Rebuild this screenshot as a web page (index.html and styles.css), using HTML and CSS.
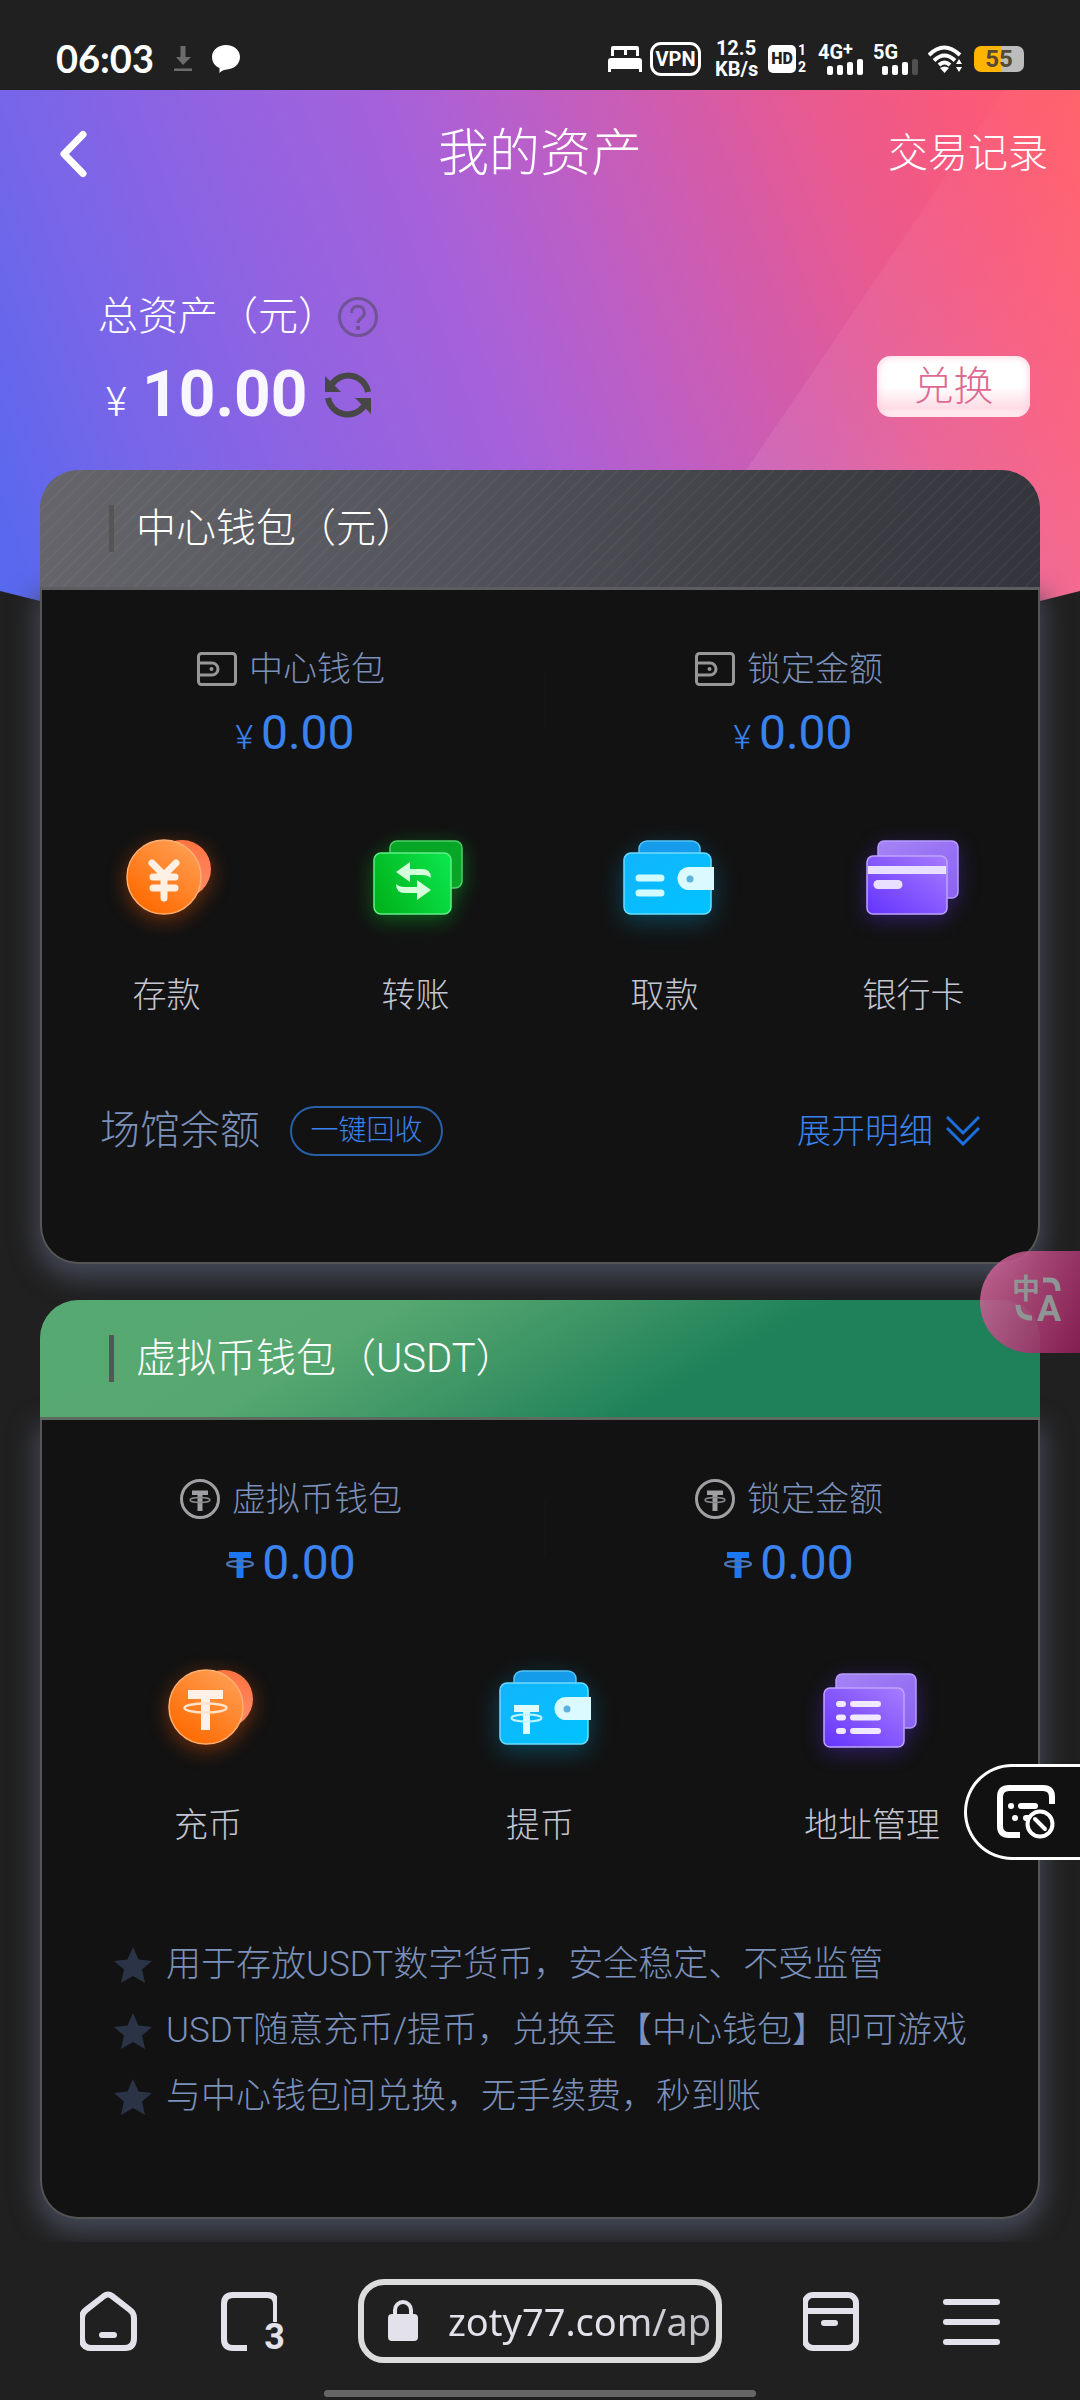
FILE: index.html
```html
<!DOCTYPE html>
<html lang="zh-CN">
<head>
    <meta charset="UTF-8">
    <meta name="viewport" content="width=device-width, initial-scale=1.0">
    <title>我的资产</title>
    <link rel="stylesheet" href="styles.css">
</head>
<body>

    <!-- shared gradients and symbols -->
    <svg class="defs" aria-hidden="true">
        <defs>
            <linearGradient id="orange" x1="1" y1="0" x2="0.3" y2="1">
                <stop offset="0" stop-color="#ffa45c"/>
                <stop offset="1" stop-color="#ff6a00"/>
            </linearGradient>
            <linearGradient id="coral" x1="0" y1="0" x2="0" y2="1">
                <stop offset="0" stop-color="#ff7440"/>
                <stop offset="1" stop-color="#ff8c6c"/>
            </linearGradient>
            <linearGradient id="green" x1="1" y1="0.3" x2="0" y2="0.7">
                <stop offset="0" stop-color="#0be34a"/>
                <stop offset="1" stop-color="#00b41c"/>
            </linearGradient>
            <linearGradient id="cyan" x1="0" y1="0" x2="1" y2="1">
                <stop offset="0" stop-color="#12b4fb"/>
                <stop offset="1" stop-color="#00c3ff"/>
            </linearGradient>
            <linearGradient id="purple" x1="1" y1="0" x2="0" y2="1">
                <stop offset="0" stop-color="#a77cff"/>
                <stop offset="1" stop-color="#6433ff"/>
            </linearGradient>
            <linearGradient id="lilac" x1="0" y1="0" x2="1" y2="1">
                <stop offset="0" stop-color="#a584f5"/>
                <stop offset="1" stop-color="#8b62f2"/>
            </linearGradient>
        </defs>
        <symbol id="wallet" viewBox="0 0 40 34">
            <g fill="none" stroke="#979797" stroke-width="3">
                <rect x="1.5" y="1.5" width="37" height="31" rx="3"/>
                <path d="M2 11h13a6 6 0 0 1 0 12H2"/>
            </g>
            <circle cx="14.500" cy="17" r="2" fill="#979797"/>
        </symbol>
        <symbol id="tether-ring" viewBox="0 0 40 40">
            <circle cx="20" cy="20" r="18.500" fill="none" stroke="#a0a0a4" stroke-width="3"/>
            <path d="M12 11.500h16v4.500h-5.500v16h-5v-16H12z" fill="#a0a0a4"/>
            <ellipse cx="20" cy="21" rx="10" ry="2.500" fill="none" stroke="#88888c" stroke-width="1.500"/>
        </symbol>
        <symbol id="tether" viewBox="0 0 28 28">
            <path d="M3 1h22v6h-7.500v20h-7V7H3z" fill="#1c78f2"/>
            <ellipse cx="14" cy="13" rx="13" ry="3" fill="none" stroke="#4b78b8" stroke-width="2"/>
        </symbol>
        <symbol id="star" viewBox="0 0 38 36">
            <path d="M19 0l5.500 12.500L38 14l-10 8.500L31 36l-12-7-12 7 3-13.500L0 14l13.500-1.500z" fill="#2a3446"/>
        </symbol>
    </svg>

    <header class="status-bar">
        <div class="status-left">
            <span class="clock">06:03</span>
            <svg width="18" height="26" viewBox="0 0 18 26">
                <path d="M6.500 0h5v11H17L9 19 2 11h4.500zM0 22.500h18V25H0z" fill="#6c6c6c"/>
            </svg>
            <svg width="28" height="28" viewBox="0 0 28 28">
                <path d="M14 0c8 0 14 5 14 12s-6 12-13 12.500c-2 0-5 .5-7.500 3.500V23C3 21 0 17 0 12 0 5 6 0 14 0z" fill="#fff"/>
            </svg>
        </div>
        <div class="status-right">
            <svg width="34" height="26" viewBox="0 0 34 26">
                <path d="M3 10V2q0-2 2-2h24q2 0 2 2v8h-3V4h-9v5h-3V4H6v6zM3 12h28q3 0 3 3v11h-3v-3H3v3H0V15q0-3 3-3z" fill="#fff"/>
            </svg>
            <span class="vpn">VPN</span>
            <span class="speed"><span>12.5</span><span>KB/s</span></span>
            <span class="hd"><b>HD</b><span class="sims"><span>1</span><span>2</span></span></span>
            <span class="signal">
                <span class="net">4G<span>+</span></span>
                <svg width="36" height="16" viewBox="0 0 36 16" fill="#fff">
                    <rect x="0" y="7" width="6" height="9" rx="2"/><rect x="10" y="6" width="6" height="10" rx="2"/><rect x="20" y="3" width="6" height="13" rx="2"/><rect x="30" width="6" height="16" rx="2"/>
                </svg>
            </span>
            <span class="signal">
                <span class="net">5G</span>
                <svg width="36" height="16" viewBox="0 0 36 16" fill="#fff">
                    <rect x="0" y="7" width="6" height="9" rx="2"/><rect x="10" y="6" width="6" height="10" rx="2"/><rect x="20" y="3" width="6" height="13" rx="2"/><rect x="30" width="6" height="16" rx="2" fill="#505050"/>
                </svg>
            </span>
            <svg width="34" height="28" viewBox="0 0 34 28" fill="none" stroke="#fff" stroke-width="4">
                <path d="M1 10Q16-5 32 10M6 15.500q10.500-10 21 0M11 20q5.500-5 11 0"/>
                <path d="M12 23q4.500-3 9 0l-4.500 5z" fill="#fff" stroke="none"/>
                <path d="M31 14l3 5h-6zM31 27l3-5h-6z" fill="#fff" stroke="none"/>
            </svg>
            <span class="battery">55</span>
        </div>
    </header>

    <main class="page">
        <div class="hero"></div>

        <nav class="nav">
            <button class="back" aria-label="返回">
                <svg width="28" height="48" viewBox="0 0 28 48" fill="none" stroke="#fff" stroke-width="7" stroke-linecap="round" stroke-linejoin="round">
                    <path d="M23 4.500L4 24l19 19.500"/>
                </svg>
            </button>
            <h1>我的资产</h1>
            <a href="#" class="records">交易记录</a>
        </nav>

        <section class="summary">
            <div>
                <div class="summary-label">总资产（元）
                    <svg width="40" height="40" viewBox="0 0 40 40" fill="none" stroke="#45444c" stroke-opacity=".5" stroke-width="3">
                        <circle cx="20" cy="20" r="18.500"/>
                        <path d="M13.500 16c0-9 13-9 13 0 0 5-6.500 5-6.500 10"/>
                        <path d="M20 29v4" stroke-width="4"/>
                    </svg>
                </div>
                <div class="summary-amount">
                    <small>¥</small><strong>10.00</strong>
                    <button class="refresh" aria-label="刷新">
                        <svg width="46" height="46" viewBox="0 0 46 46">
                            <g fill="none" stroke="#474747" stroke-width="6">
                                <path d="M43 20A20 20 0 0 0 7 12"/>
                                <path d="M3 26a20 20 0 0 0 36 8"/>
                            </g>
                            <path d="M0 4v16h16zM46 42V26H30z" fill="#474747"/>
                        </svg>
                    </button>
                </div>
            </div>
            <button class="exchange">兑换</button>
        </section>

        <section class="card">
            <h2 class="card-head center-head">中心钱包（元）</h2>
            <div class="card-body">
                <div class="stats">
                    <div class="stat">
                        <div class="stat-label"><svg width="40" height="34"><use href="#wallet"/></svg>中心钱包</div>
                        <div class="stat-value"><small>¥</small>0.00</div>
                    </div>
                    <div class="stat">
                        <div class="stat-label"><svg width="40" height="34"><use href="#wallet"/></svg>锁定金额</div>
                        <div class="stat-value"><small>¥</small>0.00</div>
                    </div>
                </div>

                <div class="actions">
                    <button class="action">
                        <svg class="glow-orange" viewBox="0 0 120 120">
                            <circle cx="75" cy="49" r="29" fill="url(#coral)"/>
                            <circle cx="57" cy="57" r="37" fill="url(#orange)" stroke="#ffb070" stroke-width="1.500"/>
                            <path d="M45 43l12 12 12-12M57 54v24M46 57h22M46 68h22" fill="none" stroke="#fff0e4" stroke-width="7" stroke-linecap="round"/>
                        </svg>
                        存款
                    </button>
                    <button class="action">
                        <svg class="glow-green" viewBox="0 0 120 120">
                            <rect x="34" y="21" width="72" height="47" rx="7" fill="#07a627" stroke="#4fd06a" stroke-width="1.500"/>
                            <rect x="18" y="33" width="77" height="61" rx="7" fill="url(#green)" stroke="#62ee88" stroke-width="1.500"/>
                            <path d="M40 52l14-10v7h12q9 0 9 9-3-3-9-3H54v7zM75 70L61 80v-7H49q-9 0-9-9 3 3 9 3h12v-7z" fill="#d6ffdc"/>
                        </svg>
                        转账
                    </button>
                    <button class="action">
                        <svg class="glow-cyan" viewBox="0 0 120 120">
                            <rect x="34" y="21" width="61" height="40" rx="8" fill="#149bea" stroke="#56c4f5" stroke-width="1.500"/>
                            <rect x="19" y="33" width="87" height="61" rx="7" fill="url(#cyan)" stroke="#6fdcff" stroke-width="1.500"/>
                            <path d="M34 58h22M34 73h22" stroke="#d2fbff" stroke-width="7" stroke-linecap="round"/>
                            <path d="M109 47v23H84a11.500 11.500 0 0 1 0-23z" fill="#dbfaff"/>
                            <circle cx="85" cy="59" r="3.500" fill="#5db2dc"/>
                        </svg>
                        取款
                    </button>
                    <button class="action">
                        <svg class="glow-purple" viewBox="0 0 120 120">
                            <rect x="24" y="21" width="80" height="57" rx="6" fill="url(#lilac)" stroke="#b79cff" stroke-width="1.500"/>
                            <rect x="13" y="36" width="80" height="58" rx="6" fill="url(#purple)" stroke="#bea4ff" stroke-width="1.500"/>
                            <path d="M14 46h78v8H14z" fill="#e9e0ff"/>
                            <path d="M24 64.500h20" stroke="#e9e0ff" stroke-width="9" stroke-linecap="round"/>
                        </svg>
                        银行卡
                    </button>
                </div>

                <div class="venue">
                    <span class="venue-label">场馆余额</span>
                    <button class="recover">一键回收</button>
                    <button class="expand">展开明细
                        <svg width="34" height="30" viewBox="0 0 34 30" fill="none" stroke="#1a70e0" stroke-width="3">
                            <path d="M1 1l16 16L33 1M1 12l16 16 16-16"/>
                        </svg>
                    </button>
                </div>
            </div>
        </section>

        <section class="card">
            <h2 class="card-head usdt-head">虚拟币钱包（USDT）</h2>
            <div class="card-body">
                <div class="stats">
                    <div class="stat">
                        <div class="stat-label"><svg width="40" height="40"><use href="#tether-ring"/></svg>虚拟币钱包</div>
                        <div class="stat-value"><svg width="28" height="28"><use href="#tether"/></svg>0.00</div>
                    </div>
                    <div class="stat">
                        <div class="stat-label"><svg width="40" height="40"><use href="#tether-ring"/></svg>锁定金额</div>
                        <div class="stat-value"><svg width="28" height="28"><use href="#tether"/></svg>0.00</div>
                    </div>
                </div>

                <div class="actions">
                    <button class="action">
                        <svg class="glow-orange" viewBox="0 0 120 120">
                            <circle cx="76" cy="49" r="29" fill="url(#coral)"/>
                            <circle cx="58" cy="57" r="37" fill="url(#orange)" stroke="#ffb070" stroke-width="1.500"/>
                            <path d="M40 40h35v9H62v31h-9V49H40z" fill="#fff0e8"/>
                            <ellipse cx="57.500" cy="58" rx="21" ry="4.500" fill="none" stroke="#ffe2c8" stroke-width="2.500"/>
                        </svg>
                        充币
                    </button>
                    <button class="action">
                        <svg class="glow-cyan" viewBox="0 0 120 120">
                            <rect x="34" y="21" width="62" height="40" rx="8" fill="#149bea" stroke="#56c4f5" stroke-width="1.500"/>
                            <rect x="20" y="33" width="88" height="61" rx="7" fill="url(#cyan)" stroke="#6fdcff" stroke-width="1.500"/>
                            <path d="M34 55h25v7h-9v22h-7V62h-9z" fill="#dffcff"/>
                            <ellipse cx="46.500" cy="68" rx="15" ry="3.500" fill="none" stroke="#c3f4ff" stroke-width="2"/>
                            <path d="M111 47v23H86a11.500 11.500 0 0 1 0-23z" fill="#dbfaff"/>
                            <circle cx="87" cy="59" r="3.500" fill="#5db2dc"/>
                        </svg>
                        提币
                    </button>
                    <button class="action">
                        <svg class="glow-purple" viewBox="0 0 120 120">
                            <rect x="24" y="24" width="80" height="54" rx="6" fill="url(#lilac)" stroke="#b79cff" stroke-width="1.500"/>
                            <rect x="12" y="38" width="80" height="59" rx="6" fill="url(#purple)" stroke="#bea4ff" stroke-width="1.500"/>
                            <path d="M27 54h4M41 54h25M27 67.500h4M41 67.500h25M27 81h4M41 81h25" stroke="#f0e9ff" stroke-width="6" stroke-linecap="round"/>
                        </svg>
                        地址管理
                    </button>
                </div>

                <ul class="notes">
                    <li><svg width="38" height="36"><use href="#star"/></svg>用于存放USDT数字货币，安全稳定、不受监管</li>
                    <li><svg width="38" height="36"><use href="#star"/></svg>USDT随意充币/提币，兑换至【中心钱包】即可游戏</li>
                    <li><svg width="38" height="36"><use href="#star"/></svg>与中心钱包间兑换，无手续费，秒到账</li>
                </ul>
            </div>
        </section>
    </main>

    <footer class="browser-bar">
        <div class="browser-tools">
            <button aria-label="主页">
                <svg width="58" height="60" viewBox="0 0 58 60" fill="none" stroke="#e3e1ea" stroke-width="6" stroke-linejoin="round" stroke-linecap="round">
                    <path d="M24 5q4-3 8 0l18 14q4 3 4 8v20q0 10-9 10H11q-9 0-9-10V27q0-5 4-8z"/>
                    <path d="M22 44h12"/>
                </svg>
            </button>
            <button class="tabs" aria-label="标签页">
                <svg width="58" height="60" viewBox="0 0 58 60" fill="none" stroke="#e3e1ea" stroke-width="6">
                    <path d="M28 57H14q-9 0-9-9V13q0-9 9-9h34q9 0 9 9v18"/>
                </svg>
                <span>3</span>
            </button>
            <label class="url">
                <svg width="30" height="42" viewBox="0 0 30 42">
                    <rect y="14" width="30" height="27" rx="4" fill="#e3e1ea"/>
                    <path d="M7 15V10a8 8 0 0 1 16 0v5" fill="none" stroke="#e3e1ea" stroke-width="4"/>
                </svg>
                <input type="text" value="zoty77.com/ap" aria-label="网址">
            </label>
            <button aria-label="收藏">
                <svg width="58" height="60" viewBox="0 0 58 60" fill="none" stroke="#e3e1ea" stroke-width="6" stroke-linecap="round">
                    <rect x="2" y="4" width="51" height="53" rx="8"/>
                    <path d="M3 20h49M21 32h11"/>
                </svg>
            </button>
            <button aria-label="菜单">
                <svg width="58" height="60" viewBox="0 0 58 60" stroke="#e3e1ea" stroke-width="6" stroke-linecap="round">
                    <path d="M4 11h51M4 31h51M4 51h51"/>
                </svg>
            </button>
        </div>
        <div class="gesture"></div>
    </footer>

    <!-- floating buttons -->
    <button class="float translate" aria-label="翻译">
        <svg width="66" height="66" viewBox="-4 -6 66 66">
            <text x="-2" y="24" class="glyph-cn">中</text>
            <text x="23" y="46" class="glyph-en">A</text>
            <path d="M29 5h7q8 0 8 11M4 30q0 13 14 13" fill="none" stroke="#8f9494" stroke-width="5"/>
        </svg>
    </button>
    <button class="float blocker" aria-label="拦截">
        <svg width="58" height="54" viewBox="0 0 58 54" fill="none" stroke="#fff" stroke-width="6">
            <path d="M23 50h-11q-9 0-9-9V12q0-9 9-9h34q9 0 9 9v7"/>
            <path d="M14 21h.1M24 21h14M18 33h.1M29 33h6" stroke-linecap="round"/>
            <circle cx="43" cy="39" r="12.500" fill="#111" stroke-width="4"/>
            <path d="M38 34l10 10" stroke-width="4" stroke-linecap="round"/>
        </svg>
    </button>

</body>
</html>
```
FILE: styles.css
```css
* {
    box-sizing: border-box;
}

body {
    margin: 0;
    min-height: 100vh;
    display: flex;
    flex-direction: column;
    position: relative;
    background: #202020;
    color: #fff;
    font-family: Roboto, "Noto Sans CJK SC", sans-serif;
    font-weight: 300;
    font-size: 34px;
    line-height: 1.2;
}

button, input {
    padding: 0;
    border: none;
    background: none;
    color: inherit;
    font: inherit;
    cursor: pointer;
}

svg {
    flex: none;
    display: block;
}

.defs {
    position: absolute;
    width: 0;
    height: 0;
}

/* status bar */
.status-bar {
    height: 90px;
    padding: 26px 56px 0 56px;
    display: flex;
    justify-content: space-between;
    font-weight: 700;
}

.status-left, .status-right {
    height: 66px;
    display: flex;
    align-items: center;
}

.clock {
    font-family: Lato, sans-serif;
    font-size: 38px;
    margin-right: 20px;
}

.status-left svg + svg {
    margin-left: 20px;
}

.vpn {
    width: 51px;
    height: 34px;
    margin: 0 14px 0 8px;
    border: 3px solid #fff;
    border-radius: 11px;
    font-size: 20px;
    line-height: 29px;
    text-align: center;
}

.speed {
    display: flex;
    flex-direction: column;
    width: 42px;
    margin-right: 11px;
    font-size: 20px;
    line-height: 21px;
    text-align: center;
}

.hd {
    display: flex;
    align-items: center;
    gap: 2px;
    width: 50px;
    font-size: 16px;
}

.hd b {
    width: 28px;
    height: 28px;
    border-radius: 5px;
    background: #fff;
    color: #202020;
    line-height: 28px;
    text-align: center;
}

.sims {
    display: flex;
    flex-direction: column;
    font-size: 14px;
    line-height: 17px;
    text-align: center;
}

.signal {
    width: 55px;
    font-size: 20px;
    line-height: 18px;
}

.net {
    display: flex;
}

.net span {
    font-size: 18px;
    line-height: 12px;
}

.signal svg {
    margin-left: 9px;
    margin-top: -2px;
}

.battery {
    width: 50px;
    height: 26px;
    margin-left: 12px;
    border-radius: 7px;
    background: linear-gradient(90deg, #ffb400 55%, #bcbcbc 55%);
    color: #554a35;
    font-size: 24px;
    line-height: 27px;
    text-align: center;
}

/* page */
.page {
    position: relative;
    overflow: hidden;
    padding-bottom: 23px;
}

.hero {
    position: absolute;
    top: 0;
    left: 0;
    right: 0;
    height: 636px;
    background: linear-gradient(70deg, #5267f0 0%, #5a68ee 6%, #7566e9 17%, #9063e2 32%, #a661da 47%, #ba5fc8 57%, #d65ba6 71%, #e85a90 79%, #f9597a 90%, #ff6068 100%);
    clip-path: polygon(0 0, 100% 0, 100% 501px, 50% 100%, 0 501px);
}

.hero::before {
    content: "";
    position: absolute;
    inset: 0;
    background: linear-gradient(0deg, rgba(255, 255, 255, 0.12), rgba(255, 255, 255, 0.02));
    clip-path: polygon(93% 0, 100% 0, 100% 100%, 53% 100%);
}

.nav, .summary, .card {
    position: relative;
}

.nav {
    height: 128px;
    padding: 0 32px;
    display: grid;
    grid-template-columns: 1fr auto 1fr;
    align-items: center;
}

.nav h1 {
    margin: 0;
    font-size: 51px;
    font-weight: 300;
}

.back {
    justify-self: start;
    margin-left: 28px;
}

.records {
    justify-self: end;
    color: #fff;
    font-size: 40px;
    text-decoration: none;
}

.summary {
    padding: 69px 50px 27px 98px;
    display: flex;
    justify-content: space-between;
    align-items: flex-end;
}

.summary-label {
    display: flex;
    align-items: center;
    height: 60px;
    font-size: 40px;
}

.summary-amount {
    display: flex;
    align-items: baseline;
    height: 96px;
    padding-left: 8px;
    line-height: 96px;
}

.summary-amount small {
    width: 36px;
    font-size: 40px;
}

.summary-amount strong {
    font-size: 64px;
    font-weight: 700;
    color: #f8f6ff;
}

.refresh {
    align-self: center;
    margin-left: 18px;
}

.exchange {
    width: 153px;
    height: 61px;
    margin-bottom: 26px;
    border-radius: 14px;
    background: linear-gradient(180deg, #fff 50%, #ffdce5 85%, #fff 100%);
    box-shadow: inset 0 0 8px #ffc9d8;
    color: #dc6a92;
    font-size: 40px;
    line-height: 56px;
}

/* cards */
.card {
    margin: 0 40px;
}

.card + .card {
    margin-top: 36px;
}

.card-head {
    position: relative;
    height: 120px;
    margin: 0;
    padding-left: 69px;
    display: flex;
    align-items: center;
    gap: 22px;
    border-bottom: 3px solid #5c5c61;
    border-radius: 38px 38px 0 0;
    font-size: 40px;
    font-weight: 300;
}

.card-head::before {
    content: "";
    width: 5px;
    height: 47px;
    background: #555;
}

.center-head {
    background:
        repeating-linear-gradient(135deg, transparent 0 8px, rgba(255, 255, 255, 0.03) 8px 10px),
        linear-gradient(100deg, #65656b 0%, #54545c 40%, #3e3f45 75%, #34343c 100%);
}

.usdt-head {
    background: linear-gradient(150deg, #56a972 0%, #57a870 30%, #3c9465 49%, #1e8159 66%);
    border-bottom-color: #5e6b60;
}

.card-body {
    border: 2px solid #555;
    border-top: none;
    border-radius: 0 0 38px 38px;
    background: #121212;
    box-shadow: 0 10px 26px 4px #444957;
    padding-top: 54px;
}

.stats {
    display: flex;
}

.stat {
    flex: 1;
}

.stat + .stat {
    background: linear-gradient(#151515, #151515) 4px 28px / 2px 56px no-repeat;
}

.stat-label {
    height: 50px;
    display: flex;
    align-items: center;
    justify-content: center;
    gap: 12px;
    color: #7b90ba;
}

.stat-value {
    height: 60px;
    margin-top: 9px;
    padding-left: 8px;
    display: flex;
    align-items: baseline;
    justify-content: center;
    gap: 8px;
    color: #3a82ee;
    font-size: 48px;
    font-weight: 400;
    line-height: 60px;
}

.stat-value small {
    font-size: 34px;
    font-weight: 300;
}

.stat-value svg {
    margin-left: -8px;
}

.actions {
    display: flex;
    margin-top: 57px;
}

.action {
    flex: 1;
    display: flex;
    flex-direction: column;
    align-items: center;
    gap: 30px;
    color: #c3c6d2;
    line-height: 50px;
}

.action svg {
    width: 120px;
    height: 120px;
    overflow: visible;
}

.glow-orange {
    filter: drop-shadow(0 5px 10px rgba(255, 90, 0, 0.4));
}

.glow-green {
    filter: drop-shadow(0 5px 10px rgba(0, 210, 40, 0.4));
}

.glow-cyan {
    filter: drop-shadow(0 7px 12px rgba(0, 180, 240, 0.3));
}

.glow-purple {
    filter: drop-shadow(0 5px 10px rgba(100, 50, 255, 0.35));
}

.venue {
    display: flex;
    align-items: center;
    height: 50px;
    margin: 86px 58px 106px;
}

.venue-label {
    color: #7b90ba;
    font-size: 40px;
}

.recover {
    width: 153px;
    height: 50px;
    margin-left: 30px;
    border: 2px solid #285fa8;
    border-radius: 25px;
    color: #3a82ee;
    font-size: 28px;
    line-height: 46px;
}

.expand {
    display: flex;
    align-items: center;
    gap: 13px;
    margin-left: auto;
    color: #3a82ee;
}

.notes {
    margin: 82px 0 0;
    padding: 0 20px 87px 72px;
    list-style: none;
    color: #7b90ba;
    font-size: 35px;
}

.notes li {
    display: flex;
    align-items: center;
    gap: 14px;
    height: 66px;
}

/* browser toolbar */
.browser-bar {
    position: relative;
    flex: 1;
    height: 158px;
    padding-top: 37px;
    background: #202020;
}

.browser-tools {
    display: flex;
    align-items: center;
    justify-content: space-between;
    height: 84px;
    padding: 0 80px;
}

.tabs {
    position: relative;
}

.tabs span {
    position: absolute;
    right: -8px;
    bottom: -6px;
    color: #e3e1ea;
    font-size: 36px;
    font-weight: 700;
    line-height: 40px;
}

.url {
    width: 364px;
    height: 84px;
    padding: 0 4px 0 24px;
    display: flex;
    align-items: center;
    gap: 30px;
    border: 6px solid #dcdcdc;
    border-radius: 26px;
}

.url input {
    flex: 1;
    min-width: 0;
    height: 60px;
    outline: none;
    color: #e3e1ea;
    font-family: "Noto Sans", sans-serif;
    font-size: 38px;
    font-weight: 400;
    -webkit-mask-image: linear-gradient(90deg, #000 60%, rgba(0, 0, 0, 0.8));
    mask-image: linear-gradient(90deg, #000 60%, rgba(0, 0, 0, 0.8));
}

.gesture {
    width: 40%;
    height: 7px;
    margin: 27px auto 0;
    border-radius: 4px;
    background: #666;
}

/* floating buttons */
.float {
    position: absolute;
    right: 0;
    display: flex;
    align-items: center;
}

.translate {
    top: 1251px;
    width: 100px;
    height: 102px;
    padding-left: 30px;
    border-radius: 51px 0 0 51px;
    background: linear-gradient(115deg, rgba(214, 110, 160, 0.85), rgba(140, 30, 85, 0.92));
}

.glyph-cn, .glyph-en {
    fill: #8f9494;
    font-weight: 700;
}

.glyph-cn {
    font-family: "Noto Sans CJK SC", sans-serif;
    font-size: 28px;
}

.glyph-en {
    font-size: 36px;
}

.blocker {
    top: 1764px;
    width: 116px;
    height: 96px;
    padding-left: 30px;
    border: 3px solid #fff;
    border-right: none;
    border-radius: 48px 0 0 48px;
    background: #111;
}
```
